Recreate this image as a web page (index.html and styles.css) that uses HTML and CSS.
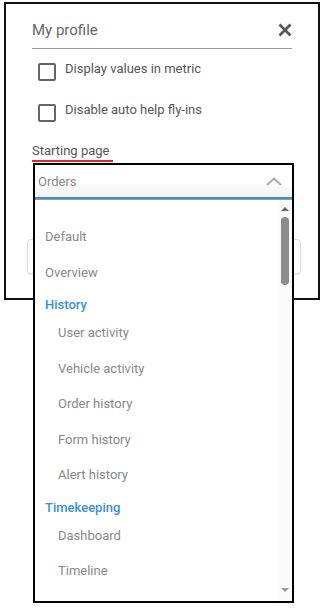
FILE: index.html
```html
<!DOCTYPE html>
<html lang="en">
  <head>
    <meta charset="UTF-8" />
    <meta name="viewport" content="width=device-width, initial-scale=1.0" />
    <title>My profile</title>
    <link rel="stylesheet" href="styles.css">
  </head>
  <body>
    <div class="dialog">
      <div class="dialog-header">
        <span class="dialog-title">My profile</span>
        <button type="button" class="close-btn" aria-label="Close">
          <svg width="14" height="14" viewBox="0 0 14 14">
            <path d="M1.5 1.5L12.5 12.5M12.5 1.5L1.5 12.5" stroke="#555" stroke-width="2.6" />
          </svg>
        </button>
      </div>

      <label class="check-row"><span class="check-box"></span>Display values in metric</label>
      <label class="check-row"><span class="check-box"></span>Disable auto help fly-ins</label>

      <div class="field-label">Starting page</div>

      <!-- Starting page select, shown open -->
      <div class="select">
        <div class="select-open">
          <div class="select-field">
            <span>Orders</span>
            <svg width="16" height="9" viewBox="0 0 16 9">
              <path d="M1 8L8 1.5L15 8" fill="none" stroke="#aaa" stroke-width="2" />
            </svg>
          </div>
          <div class="select-list">
            <ul class="options">
              <li class="option">Default</li>
              <li class="option">Overview</li>
              <li class="group">History</li>
              <li class="option sub">User activity</li>
              <li class="option sub">Vehicle activity</li>
              <li class="option sub">Order history</li>
              <li class="option sub">Form history</li>
              <li class="option sub">Alert history</li>
              <li class="group">Timekeeping</li>
              <li class="option sub">Dashboard</li>
              <li class="option sub">Timeline</li>
            </ul>
            <div class="scrollbar">
              <span class="arrow-up"></span>
              <span class="thumb"></span>
              <span class="track-fill"></span>
              <span class="arrow-down"></span>
            </div>
          </div>
        </div>
      </div>

      <button type="button" class="save-btn">Save</button>
    </div>
  </body>
</html>
```

FILE: styles.css
```css
html,
body {
  min-height: 610px;
}
body {
  font-family: Roboto, "Liberation Sans", Arial, sans-serif;
  background-color: #ffffff;
  color: #555555;
  margin: 0;
  padding: 0;
}
.dialog {
  box-sizing: border-box;
  width: 316px;
  height: 298px;
  margin: 2px 0 0 4px;
  padding: 0 26px;
  border: 2px solid #111111;
  background-color: #ffffff;
}
.dialog-header {
  display: flex;
  align-items: center;
  justify-content: space-between;
  padding: 14px 0 6px;
  border-bottom: 1px solid #999999;
}
.dialog-title {
  font-size: 15px;
  line-height: 24px;
  color: #666666;
}
.close-btn {
  width: 14px;
  height: 14px;
  padding: 0;
  margin: 0;
  border: none;
  background: none;
  display: flex;
  cursor: pointer;
}
.check-row {
  display: flex;
  align-items: flex-start;
  font-size: 13px;
  line-height: 20px;
  color: #555555;
  margin-bottom: 19px;
}
.dialog-header + .check-row {
  margin-top: 10px;
}
.check-box {
  box-sizing: border-box;
  width: 18px;
  height: 18px;
  margin: 4px 9px 0 6px;
  border: 2px solid #666666;
  border-radius: 2px;
  flex-shrink: 0;
}
.field-label {
  width: fit-content;
  margin-top: 4px;
  padding-right: 4px;
  font-size: 13px;
  line-height: 19px;
  color: #555555;
  border-bottom: 2px solid #e0242b;
}
.select {
  position: relative;
  height: 38px;
  margin-top: 1px;
}
.select-open {
  position: absolute;
  top: 0;
  left: 1px;
  z-index: 2;
  box-sizing: border-box;
  width: 261px;
  height: 440px;
  border: 2px solid #000000;
  background-color: #ffffff;
  display: flex;
  flex-direction: column;
}
.select-field {
  display: flex;
  align-items: center;
  justify-content: space-between;
  height: 32px;
  padding: 0 10px 0 3px;
  font-size: 13px;
  color: #888888;
  background: linear-gradient(to bottom, #ffffff 55%, #f2f2f2);
  border-bottom: 2px solid #3a8fd6;
}
.select-list {
  flex: 1;
  display: flex;
  border-top: 1px solid #999999;
  min-height: 0;
}
.options {
  flex: 1;
  list-style: none;
  margin: 0;
  padding: 19px 0 0;
  font-size: 13px;
}
.option {
  line-height: 35.5px;
  padding-left: 10px;
  color: #888888;
}
.option.sub {
  padding-left: 23px;
}
.group {
  padding: 5px 0 1px 10px;
  line-height: 19px;
  font-weight: 500;
  color: #3a8fd6;
}
.scrollbar {
  width: 15px;
  display: flex;
  flex-direction: column;
  align-items: center;
  padding: 7px 0 9px;
  background-color: #fafafa;
}
.arrow-up {
  width: 0;
  height: 0;
  border-left: 4px solid transparent;
  border-right: 4px solid transparent;
  border-bottom: 4px solid #666666;
}
.thumb {
  width: 8px;
  height: 68px;
  margin-top: 6px;
  border-radius: 4px;
  background-color: #8c8c8c;
}
.track-fill {
  flex: 1;
}
.arrow-down {
  width: 0;
  height: 0;
  border-left: 4px solid transparent;
  border-right: 4px solid transparent;
  border-top: 4px solid #999999;
}
.save-btn {
  display: block;
  width: 274px;
  height: 35px;
  margin: 38px 0 0 -5px;
  border: 1px solid #dddddd;
  border-radius: 4px;
  background-color: #ffffff;
  color: #555555;
  font-family: inherit;
  font-size: 14px;
  box-shadow: 0 1px 2px rgba(0, 0, 0, 0.08);
}
```
